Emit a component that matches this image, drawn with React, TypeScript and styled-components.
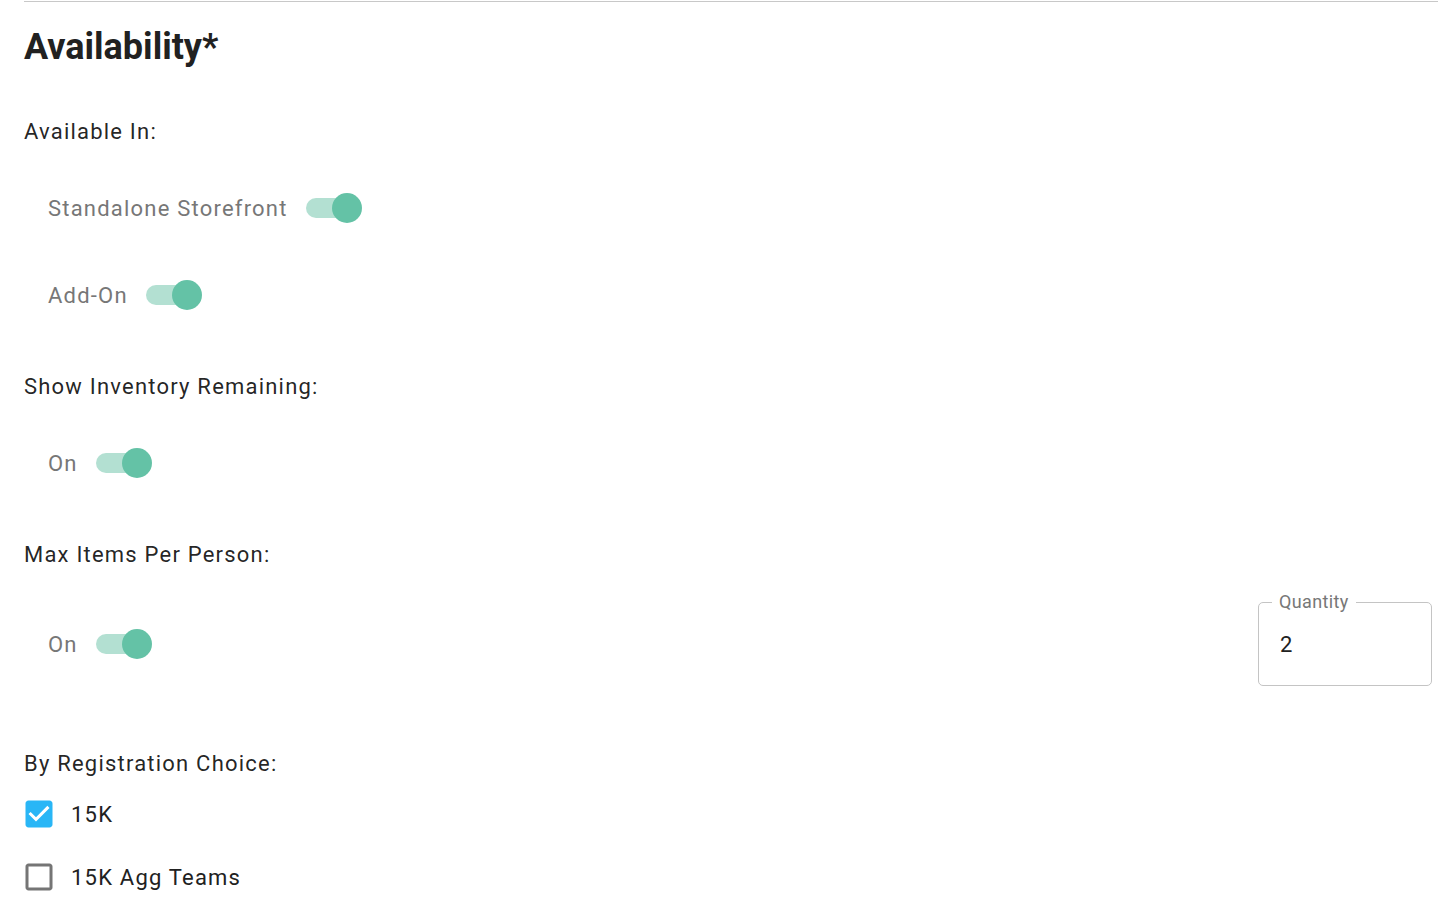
import React from "react";
import styled, { createGlobalStyle } from "styled-components";

const GlobalStyle = createGlobalStyle`
  html, body {
    margin: 0;
    padding: 0;
    background: #fff;
  }
  body {
    font-family: Roboto, "Liberation Sans", Arial, sans-serif;
    color: rgba(0, 0, 0, 0.87);
  }
`;

const Section = styled.section`
  margin: 1px 15px 0 24px;
  border-top: 1px solid #c8c8c8;
  padding-bottom: 20px;
`;

const Title = styled.h2`
  margin: 24px 0 0;
  font-size: 36px;
  line-height: 42px;
  font-weight: 700;
  color: #212121;
`;

const GroupLabel = styled.div<{ $top: number }>`
  margin-top: ${(p) => p.$top}px;
  font-size: 22px;
  line-height: 28px;
  letter-spacing: 0.055em;
  color: rgba(0, 0, 0, 0.87);
`;

const ToggleRow = styled.div<{ $top: number }>`
  display: flex;
  align-items: center;
  justify-content: space-between;
  margin-top: ${(p) => p.$top}px;
  min-height: 48px;
`;

const ToggleLabel = styled.label`
  display: flex;
  align-items: center;
  gap: 18px;
  padding-left: 24px;
  font-size: 22px;
  letter-spacing: 0.055em;
  color: #777;
  cursor: pointer;
`;

const Track = styled.span<{ $on: boolean }>`
  position: relative;
  display: inline-block;
  width: 52px;
  height: 20px;
  border-radius: 10px;
  background: ${(p) => (p.$on ? "#b3e0d2" : "#bdbdbd")};
`;

const Thumb = styled.span<{ $on: boolean }>`
  position: absolute;
  top: -5px;
  left: ${(p) => (p.$on ? "26px" : "-4px")};
  width: 30px;
  height: 30px;
  border-radius: 50%;
  background: ${(p) => (p.$on ? "#64c2a6" : "#fafafa")};
`;

const FieldBox = styled.div`
  position: relative;
  margin-right: 6px;
  width: 174px;
  height: 84px;
  box-sizing: border-box;
  border: 1px solid #c4c4c4;
  border-radius: 5px;
  padding-left: 21px;
  display: flex;
  align-items: center;
`;

const FloatLabel = styled.span`
  position: absolute;
  top: -13px;
  left: 13px;
  padding: 0 7px;
  background: #fff;
  font-size: 18px;
  line-height: 24px;
  color: #777;
  letter-spacing: 0.02em;
`;

const FieldValue = styled.span`
  font-size: 22px;
  color: #212121;
`;

const CheckRow = styled.label<{ $top: number }>`
  display: flex;
  align-items: center;
  gap: 14px;
  margin-top: ${(p) => p.$top}px;
  margin-left: -3px;
  height: 40px;
  font-size: 22px;
  letter-spacing: 0.055em;
  color: #212121;
  cursor: pointer;
`;

const Check = ({ label, checked, top }: { label: string; checked: boolean; top: number }) => (
  <CheckRow $top={top}>
    <svg width="36" height="36" viewBox="0 0 24 24">
      {checked ? (
        <>
          <rect x="4" y="4" width="16" height="16" fill="#fff" />
          <path
            fill="#29b6f6"
            d="M19 3H5c-1.11 0-2 .9-2 2v14c0 1.1.89 2 2 2h14c1.11 0 2-.9 2-2V5c0-1.1-.89-2-2-2zm-9 14l-5-5 1.41-1.41L10 14.17l7.59-7.59L19 8l-9 9z"
          />
        </>
      ) : (
        <path
          fill="#757575"
          d="M19 5v14H5V5h14m0-2H5c-1.1 0-2 .9-2 2v14c0 1.1.9 2 2 2h14c1.1 0 2-.9 2-2V5c0-1.1-.9-2-2-2z"
        />
      )}
    </svg>
    {label}
  </CheckRow>
);

const Toggle = ({ label, on }: { label: string; on: boolean }) => (
  <ToggleLabel>
    {label}
    <Track $on={on}>
      <Thumb $on={on} />
    </Track>
  </ToggleLabel>
);

export default function App() {
  return (
    <>
      <GlobalStyle />
      <Section>
        <Title>Availability*</Title>
        <GroupLabel $top={50}>Available In:</GroupLabel>
        <ToggleRow $top={38}>
          <Toggle label="Standalone Storefront" on />
        </ToggleRow>
        <ToggleRow $top={39}>
          <Toggle label="Add-On" on />
        </ToggleRow>
        <GroupLabel $top={54}>Show Inventory Remaining:</GroupLabel>
        <ToggleRow $top={38}>
          <Toggle label="On" on />
        </ToggleRow>
        <GroupLabel $top={54}>Max Items Per Person:</GroupLabel>
        <ToggleRow $top={33}>
          <Toggle label="On" on />
          <FieldBox>
            <FloatLabel>Quantity</FloatLabel>
            <FieldValue>2</FieldValue>
          </FieldBox>
        </ToggleRow>
        <GroupLabel $top={64}>By Registration Choice:</GroupLabel>
        <Check label="15K" checked top={16} />
        <Check label="15K Agg Teams" checked={false} top={23} />
      </Section>
    </>
  );
}
